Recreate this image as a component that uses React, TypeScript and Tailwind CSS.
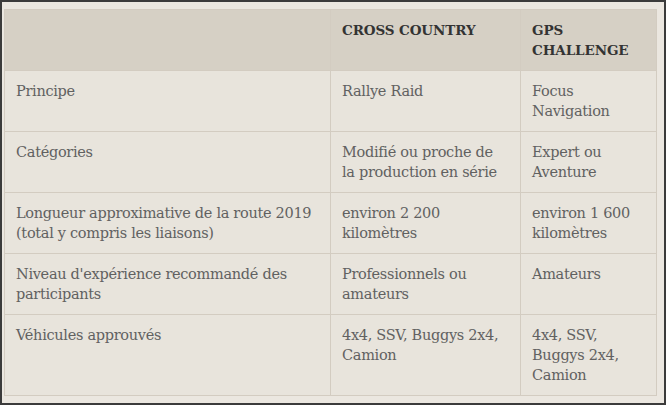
import React from "react";

const rows: string[][] = [
  ["Principe", "Rallye Raid", "Focus Navigation"],
  ["Catégories", "Modifié ou proche de la production en série", "Expert ou Aventure"],
  ["Longueur approximative de la route 2019 (total y compris les liaisons)", "environ 2 200 kilomètres", "environ 1 600 kilomètres"],
  ["Niveau d'expérience recommandé des participants", "Professionnels ou amateurs", "Amateurs"],
  ["Véhicules approuvés", "4x4, SSV, Buggys 2x4, Camion", "4x4, SSV, Buggys 2x4, Camion"],
];

export default function App() {
  return (
    <div
      className="w-[666px] h-[405px] overflow-hidden border-2 border-[#3b3b3b] bg-[#ebe7e0] pt-[7px] pl-[2px]"
      style={{ fontFamily: '"DejaVu Serif", serif' }}
    >
      <table className="table-fixed border-collapse w-[652px] text-[14.5px] leading-[20px] tracking-[-0.3px]">
        <colgroup>
          <col className="w-[326px]" />
          <col className="w-[190px]" />
          <col className="w-[136px]" />
        </colgroup>
        <thead>
          <tr className="bg-[#d6d0c5]">
            <th className="border border-[#d3ccc1] px-[11px] pt-[10px] pb-[10px] h-[61px] align-top text-left font-bold text-[#333] text-[13.5px] tracking-[0px]"></th>
            <th className="border border-[#d3ccc1] px-[11px] pt-[10px] pb-[10px] align-top text-left font-bold text-[#333] text-[13.5px] tracking-[-0.1px]">CROSS COUNTRY</th>
            <th className="border border-[#d3ccc1] px-[11px] pt-[10px] pb-[10px] align-top text-left font-bold text-[#333] text-[13.5px] tracking-[-0.1px]">GPS CHALLENGE</th>
          </tr>
        </thead>
        <tbody>
          {rows.map((r, i) => (
            <tr key={i} className="bg-[#e8e4dc]">
              {r.map((c, j) => (
                <td
                  key={j}
                  className="border border-[#d3ccc1] px-[11px] pt-[10px] pb-[10px] align-top text-[#616161] font-light"
                >
                  {c}
                </td>
              ))}
            </tr>
          ))}
        </tbody>
      </table>
    </div>
  );
}
